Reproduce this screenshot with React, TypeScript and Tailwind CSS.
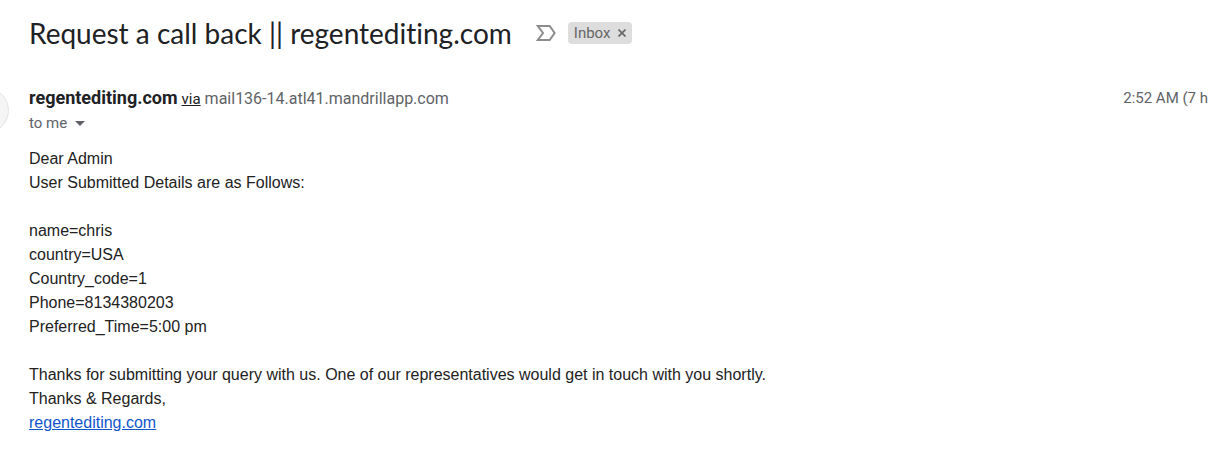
const details = [
  'name=chris',
  'country=USA',
  'Country_code=1',
  'Phone=8134380203',
  'Preferred_Time=5:00 pm',
]

export default function App() {
  return (
    <main className="min-h-screen overflow-hidden bg-white pt-4 text-[#202124] [font-family:Roboto,sans-serif]">
      <header className="flex items-center pl-[29px]">
        <h1 className="whitespace-nowrap text-[28px] leading-[34px] [font-family:Lato,sans-serif] [font-variant-ligatures:none]">
          Request a call back || regentediting.com
        </h1>
        <button type="button" aria-label="Mark as important" className="ml-6 block">
          <svg width="20" height="16" viewBox="0 0 20 16" fill="none" stroke="#8c8c8c" strokeWidth="2">
            <path d="M1.8 1h11.9L18.6 8l-4.9 7H1.8L7 8z" />
          </svg>
        </button>
        <div className="ml-3 flex h-[22px] items-center rounded bg-[#ddd] px-1.5 text-[15px] text-[#666]">
          <span>Inbox</span>
          <button type="button" aria-label="Remove label Inbox" className="ml-2">
            <svg width="8" height="8" viewBox="0 0 8 8" stroke="#666" strokeWidth="1.6">
              <path d="M.5.5l7 7M7.5.5l-7 7" />
            </svg>
          </button>
        </div>
      </header>

      <section className="mt-[38px] flex items-start">
        <div className="-ml-9 h-[45px] w-[45px] shrink-0 rounded-full border border-[#e4e4e4] bg-[#f5f5f5]" />
        <div className="ml-5 min-w-0 flex-1">
          <div className="flex items-baseline whitespace-nowrap">
            <span className="text-lg leading-5 font-bold">regentediting.com</span>
            <a href="#via" className="ml-1 text-[15px] leading-5 underline">via</a>
            <span className="ml-1 text-base leading-5 text-[#5f6368]">mail136-14.atl41.mandrillapp.com</span>
          </div>
          <button type="button" className="mt-1 flex items-center text-[15px] leading-5 text-[#5f6368]">
            to me
            <svg className="ml-2" width="10" height="5" viewBox="0 0 10 5" fill="#5f6368">
              <path d="M0 0h10L5 5z" />
            </svg>
          </button>
        </div>
        <time className="shrink-0 whitespace-nowrap text-[15px] leading-5 text-[#5f6368]">2:52 AM (7 h</time>
      </section>

      <article className="mt-3.5 pl-[29px] text-base leading-6 text-[#222] [font-family:'Liberation_Sans',Arial,sans-serif]">
        <p>Dear Admin</p>
        <p>User Submitted Details are as Follows:</p>
        <div className="my-6">
          {details.map((line) => (
            <p key={line}>{line}</p>
          ))}
        </div>
        <p>Thanks for submitting your query with us. One of our representatives would get in touch with you shortly.</p>
        <p>Thanks &amp; Regards,</p>
        <a href="#site" className="text-[#15c] underline">regentediting.com</a>
      </article>
    </main>
  )
}
